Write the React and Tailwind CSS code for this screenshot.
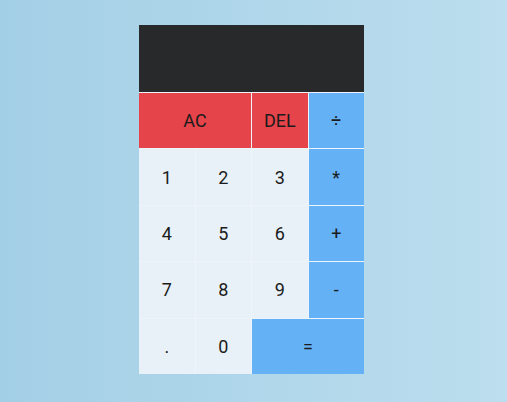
const keys = [
  { label: "AC", cls: "col-span-2 bg-[#e5444b]" },
  { label: "DEL", cls: "bg-[#e5444b]" },
  { label: "÷", cls: "bg-[#64b1f5]" },
  { label: "1", cls: "bg-[#e8f1f8]" },
  { label: "2", cls: "bg-[#e8f1f8]" },
  { label: "3", cls: "bg-[#e8f1f8]" },
  { label: "*", cls: "bg-[#64b1f5]" },
  { label: "4", cls: "bg-[#e8f1f8]" },
  { label: "5", cls: "bg-[#e8f1f8]" },
  { label: "6", cls: "bg-[#e8f1f8]" },
  { label: "+", cls: "bg-[#64b1f5]" },
  { label: "7", cls: "bg-[#e8f1f8]" },
  { label: "8", cls: "bg-[#e8f1f8]" },
  { label: "9", cls: "bg-[#e8f1f8]" },
  { label: "-", cls: "bg-[#64b1f5]" },
  { label: ".", cls: "bg-[#e8f1f8]" },
  { label: "0", cls: "bg-[#e8f1f8]" },
  { label: "=", cls: "col-span-2 bg-[#64b1f5]" },
];

export default function App() {
  return (
    <div className="w-[507px] h-[402px] flex justify-center pt-[25px] pr-[4px] bg-gradient-to-r from-[#a3cfe6] to-[#bcdeee] font-['Roboto',sans-serif]">
      <div className="w-[225px] h-fit flex flex-col gap-px bg-[#eef5fa]">
        <div className="h-[67px] bg-[#27292b]" />
        <div className="grid grid-cols-4 auto-rows-[55.4px] gap-px">
          {keys.map((k) => (
            <button
              key={k.label}
              className={`${k.cls} flex items-center justify-center text-[18px] text-[#1b1b1b]`}
            >
              {k.label}
            </button>
          ))}
        </div>
      </div>
    </div>
  );
}
